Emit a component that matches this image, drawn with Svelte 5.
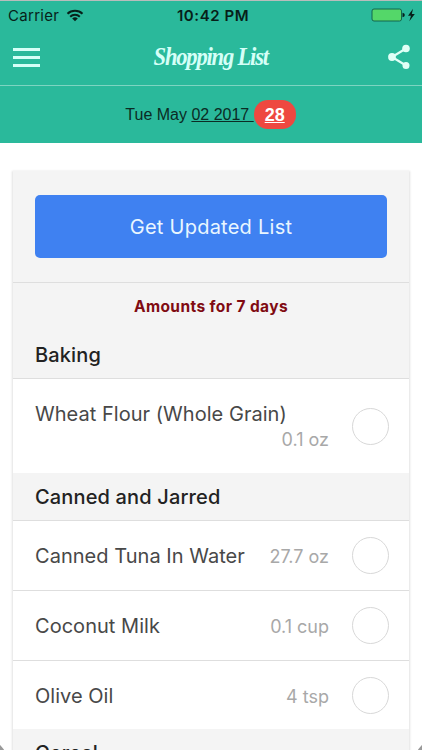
<script>
  const sections = [
    {
      name: "Baking",
      items: [{ name: "Wheat Flour (Whole Grain)", amount: "0.1 oz", tall: true }],
    },
    {
      name: "Canned and Jarred",
      items: [
        { name: "Canned Tuna In Water", amount: "27.7 oz" },
        { name: "Coconut Milk", amount: "0.1 cup" },
        { name: "Olive Oil", amount: "4 tsp" },
      ],
    },
    { name: "Cereal", items: [] },
  ];
</script>

<div class="screen">
  <div class="status">
    <div class="carrier">
      <span>Carrier</span>
      <svg width="18" height="13" viewBox="0 0 18 13" fill="none" stroke="#071f19" stroke-width="2">
        <path d="M1.5 4.7C5.5.7 12.5.7 16.5 4.7M4.2 7.7c2.7-2.6 6.9-2.6 9.6 0" />
        <path d="M9 12.2 6.2 9.4q2.8-2.2 5.6 0z" fill="#071f19" stroke="none" />
      </svg>
    </div>
    <div class="time">10:42 PM</div>
    <div class="power">
      <svg width="45" height="14" viewBox="0 0 45 14">
        <rect x="1" y="1" width="29.5" height="12" rx="2" fill="#54d769" stroke="#12664f" />
        <path d="M31.5 4.7q2.3.4 2.3 2.3t-2.3 2.3z" fill="#071f19" />
        <path d="m42 .8-5 7h3l-1.7 5.4 5.5-7.3h-3z" fill="#071f19" />
      </svg>
    </div>
  </div>

  <header>
    <button class="menu" aria-label="Menu"><i></i><i></i><i></i></button>
    <h1>Shopping List</h1>
    <button class="share" aria-label="Share">
      <svg width="24" height="26" viewBox="0 0 24 26" fill="#e0fff6">
        <path d="M19 4.5 5 13l14 8.5" fill="none" stroke="#e0fff6" stroke-width="2.2" />
        <circle cx="19" cy="4.5" r="3.8" />
        <circle cx="5" cy="13" r="3.9" />
        <circle cx="19" cy="21.5" r="3.5" />
      </svg>
    </button>
  </header>

  <div class="date">
    <span class="day">Tue May <u>02 2017&nbsp;</u></span><span class="badge">28</span>
  </div>

  <main>
    <div class="card">
      <div class="action"><button class="update"><span>Get Updated List</span></button></div>
      <div class="note"><span>Amounts for 7 days</span></div>
      {#each sections as section}
        <h2>{section.name}</h2>
        {#each section.items as item}
          <div class="item" class:tall={item.tall}>
            <div class="text">
              <span class="name">{item.name}</span>
              <span class="amount">{item.amount}</span>
            </div>
            <span class="check"></span>
          </div>
        {/each}
      {/each}
    </div>
  </main>
  <i class="corner left"></i>
  <i class="corner right"></i>
</div>

<style>
  :global(body) {
    margin: 0;
    background: #fff;
  }

  .screen {
    position: relative;
    box-sizing: border-box;
    height: 750px;
    overflow: hidden;
    border-top: 1px solid #b9bdbc;
    background: #fff;
    font-family: Inter, "Liberation Sans", sans-serif;
    display: flex;
    flex-direction: column;
  }

  button {
    border: 0;
    padding: 0;
    background: none;
    font: inherit;
  }

  svg {
    display: block;
  }

  .status {
    flex: none;
    height: 28px;
    display: grid;
    grid-template-columns: 1fr auto 1fr;
    align-items: center;
    padding: 0 6px 0 8px;
    background: #2ab99b;
    color: #071f19;
    font-size: 15px;
  }

  .carrier {
    display: flex;
    align-items: center;
    gap: 7px;
    letter-spacing: 0.3px;
  }

  .time {
    font-weight: 600;
    letter-spacing: 0.55px;
    padding-left: 2px;
  }

  .power {
    justify-self: end;
  }

  header {
    flex: none;
    box-sizing: border-box;
    height: 57px;
    display: flex;
    justify-content: space-between;
    align-items: center;
    padding: 0 11px 0 13px;
    background: #2ab99b;
    border-bottom: 1px solid #7dd4c1;
  }

  .menu {
    width: 27px;
    display: flex;
    flex-direction: column;
    gap: 5px;
  }

  .menu i {
    height: 3px;
    background: #d5fff7;
  }

  h1 {
    margin: 0 6px 0 0;
    color: #d5fff7;
    font: italic bold 26px "Liberation Serif", serif;
    letter-spacing: -1.4px;
    transform: scaleX(0.87);
  }

  .date {
    flex: none;
    height: 57px;
    display: flex;
    justify-content: center;
    align-items: center;
    background: #2ab99b;
    color: #0b2b24;
    font: 16px "Liberation Sans", sans-serif;
  }

  .day {
    padding-top: 1px;
  }

  .badge {
    width: 42px;
    height: 29px;
    margin-right: 1px;
    border-radius: 14px;
    background: #ee4840;
    color: #fff;
    font-size: 18px;
    font-weight: bold;
    line-height: 30px;
    text-align: center;
    text-decoration: underline;
  }

  main {
    padding: 28px 13px 0;
  }

  .card {
    background: #f4f4f4;
    box-shadow: 0 1px 2px 1px #e2e2e2;
  }

  .action {
    padding: 24px 22px;
    border-bottom: 1px solid #dedede;
  }

  .update {
    display: block;
    width: 100%;
    height: 63px;
    border-radius: 5px;
    background: #3f81f1;
    color: #e9f6ff;
    font-size: 20px;
    letter-spacing: 0.25px;
  }

  .note {
    height: 48px;
    line-height: 48px;
    text-align: center;
    color: #800b12;
    font-size: 15.5px;
    font-weight: 700;
    letter-spacing: 0.4px;
  }

  h2 {
    box-sizing: border-box;
    height: 48px;
    margin: 0;
    padding-left: 22px;
    border-bottom: 1px solid #dedede;
    color: #222;
    font-size: 20px;
    font-weight: 500;
    letter-spacing: 0.15px;
    line-height: 48px;
  }

  .item {
    box-sizing: border-box;
    height: 70px;
    display: flex;
    align-items: center;
    padding: 0 20px 0 22px;
    background: #fff;
    border-bottom: 1px solid #dedede;
  }

  .item:has(+ h2) {
    height: 68px;
    border-bottom: 0;
  }

  .item.tall:has(+ h2) {
    height: 94px;
  }

  .text {
    flex: 1;
    display: flex;
    justify-content: space-between;
    align-items: baseline;
    margin-right: 23px;
    padding-top: 2px;
    line-height: 26px;
  }

  .tall .text {
    flex-direction: column;
    align-items: stretch;
  }

  .name {
    color: #484848;
    font-size: 20px;
    letter-spacing: 0.03px;
    white-space: nowrap;
  }

  .amount {
    color: #a8a8a8;
    font-size: 18px;
    text-align: right;
  }

  .check {
    box-sizing: border-box;
    width: 37px;
    height: 37px;
    border: 1px solid #d8d8d8;
    border-radius: 50%;
  }

  .corner {
    position: absolute;
    bottom: 0;
    width: 4px;
    height: 5px;
  }

  .left {
    left: 0;
    background: linear-gradient(50deg, #9a9a9a 45%, transparent 60%);
  }

  .right {
    right: 0;
    background: linear-gradient(-50deg, #9a9a9a 45%, transparent 60%);
  }
</style>
